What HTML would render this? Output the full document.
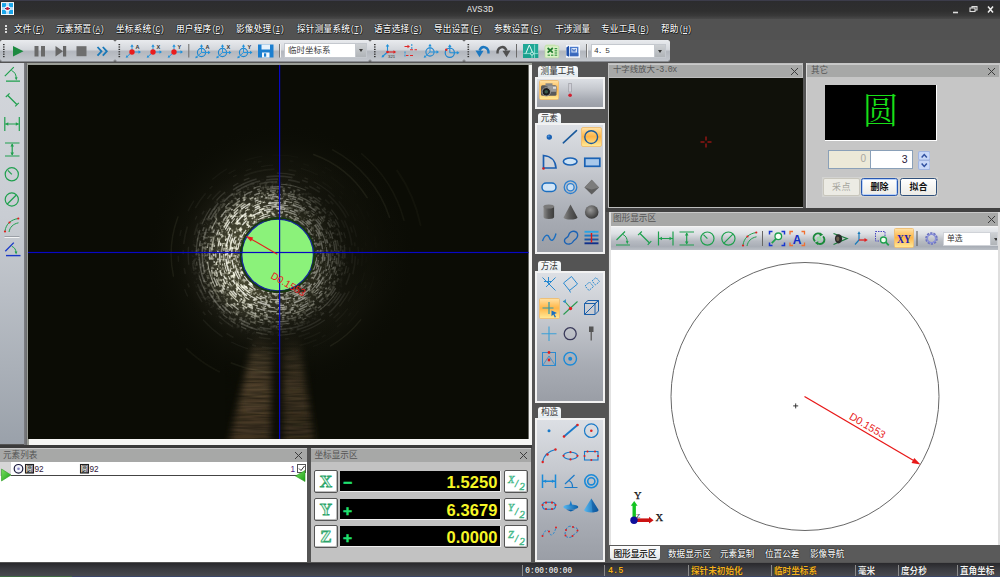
<!DOCTYPE html>
<html lang="zh-CN">
<head>
<meta charset="utf-8">
<title>AVS3D</title>
<style>
html,body{margin:0;padding:0;}
body{width:1000px;height:577px;overflow:hidden;background:#545454;position:relative;
 font-family:"Liberation Sans","Noto Sans CJK SC",sans-serif;font-size:9px;color:#222;}
.abs{position:absolute;}
#titlebar{left:0;top:0;width:1000px;height:19px;background:linear-gradient(#2c2c2e,#2f2f2f 55%,#383838 80%,#494949);border-top:1px solid #3c3c4a;box-sizing:border-box;}
#title{left:439px;top:4px;width:82px;text-align:center;color:#e4e4e4;font-family:"Liberation Mono",monospace;font-size:8.9px;line-height:12px;}
#menubar{left:0;top:19px;width:1000px;height:21px;background:#525252;}
.mi{position:absolute;top:23px;height:12px;line-height:12px;font-size:8.6px;letter-spacing:.25px;color:#f4f4f4;white-space:nowrap;text-shadow:0 0 1px #000,0 0 1px #000,.5px .5px 0 #222;font-weight:500;}
.mi u{text-decoration:underline;}
.mi .l{font-family:"Liberation Mono",monospace;font-size:8.2px;letter-spacing:-.75px;}
#tbarea{left:0;top:40px;width:1000px;height:23px;background:#545454;}
.tb{position:absolute;top:39.700px;height:21.500px;background:linear-gradient(#e9ebee,#d4d7dc 45%,#b3b7be 55%,#c3c7cd);border-radius:2.500px;box-shadow:0 1px 0 #8a8d92;}
.grip{position:absolute;width:2px;background:repeating-linear-gradient(#3a3a3a 0 1px,transparent 1px 2.5px);}
.sep{position:absolute;width:1px;background:#777;box-shadow:1px 0 0 #eee;}
.combo{position:absolute;background:#fff;border:1px solid #c4c8ce;box-sizing:border-box;font-size:8.5px;line-height:11px;color:#444;padding-left:3px;}
.combo i{position:absolute;right:0;top:0;bottom:0;width:10px;background:linear-gradient(#cdd0d3,#b0b4b8);border-left:1px solid #c4c8ce;}
.combo i:after{content:"";position:absolute;left:2.500px;top:5px;border:2.500px solid transparent;border-top:3px solid #3a3a3a;border-bottom:0;}
.ptitle{position:absolute;height:13px;background:#a7a8a7;color:#555;font-size:8.6px;line-height:11px;padding-left:4px;box-sizing:border-box;border-top:1px solid #c9c9c9;}
.ptitle b{position:absolute;right:4.500px;top:3px;width:7px;height:7px;font-size:0;background:linear-gradient(45deg,transparent 44%,#3c3c3c 44%,#3c3c3c 56%,transparent 56%),linear-gradient(-45deg,transparent 44%,#3c3c3c 44%,#3c3c3c 56%,transparent 56%);}
.panel{position:absolute;background:#c5c5c5;}
.tab{position:absolute;height:11px;background:linear-gradient(#fcfcfc,#e2eaee);border-radius:3px 3px 0 0;font-size:8.6px;line-height:11px;color:#333;text-align:center;}
.tpanel{position:absolute;border:2px solid #f2f2f2;box-sizing:border-box;background:linear-gradient(#dcdfe4,#c6c9cf 35%,#a8acb4 72%,#9a9ea6);}
.sel{position:absolute;background:linear-gradient(#ffe0a2,#ffc566 30%,#ffb548 48%,#ffd070 75%,#ffe894);border:1px solid #eec078;box-sizing:border-box;border-radius:1.500px;}
.btab{position:absolute;top:547.500px;height:13px;line-height:13px;font-size:8.600px;color:#f2f2f2;white-space:nowrap;text-shadow:0 0 1px #000,0 0 1px #000;font-weight:500;}
.cbtn{position:absolute;width:24px;height:23px;box-sizing:border-box;background:#fff;border:1px solid #555;border-radius:2px;box-shadow:inset -1px -1px 0 #bbb;font-family:"Liberation Serif",serif;font-weight:bold;font-size:17px;line-height:21px;text-align:center;color:#d8f4e4;-webkit-text-stroke:.8px #2aa468;}
.cbtn.h{font-size:10.500px;line-height:14px;text-align:left;padding-left:3px;padding-top:1.500px;font-style:italic;font-weight:normal;color:#7adcb0;-webkit-text-stroke:.45px #38b080;}
.cbtn.h i{font-size:10.500px;position:absolute;left:10px;top:5.500px;}
.cbtn.h s{text-decoration:none;font-size:10.500px;position:absolute;left:14.500px;top:8.500px;}
.cdisp{position:absolute;width:161px;height:21px;box-sizing:border-box;background:#000;border-bottom:1px solid #eee;border-right:1px solid #eee;color:#f6f626;font-weight:bold;font-size:16.500px;line-height:22px;text-align:right;padding-right:2.500px;letter-spacing:.1px;}
.cdisp .sg{position:absolute;left:3px;top:1px;color:#20e070;font-size:15.500px;letter-spacing:0;-webkit-text-stroke:.5px #20e070;}
.st{position:absolute;top:565.700px;height:11px;line-height:11px;font-size:8.600px;color:#f0f0f0;white-space:nowrap;font-weight:bold;text-shadow:0 0 1px #000;}
.st.y{color:#f0b020;}
.ss{position:absolute;top:565px;width:1px;height:11px;background:#8a8a8a;}
</style>
</head>
<body>
<!-- title bar -->
<div id="titlebar" class="abs"></div>
<svg class="abs" style="left:.8px;top:2px" width="13" height="13.200" viewBox="0 0 13 13"><rect x="0" y="0" width="13" height="13" fill="#fff"/><rect x="1" y="1" width="4.300" height="4.300" fill="#1aa6ea"/><rect x="7.700" y="1" width="4.300" height="4.300" fill="#1aa6ea"/><rect x="1" y="7.700" width="4.300" height="4.300" fill="#1aa6ea"/><rect x="7.700" y="7.700" width="4.300" height="4.300" fill="#1aa6ea"/><rect x="5.300" y="1" width="2.400" height="11" fill="#b8dcf8"/><rect x="1" y="5.300" width="11" height="2.400" fill="#b8dcf8"/><circle cx="6.500" cy="6.500" r="2.900" fill="#fff" opacity=".7"/><rect x="4" y="6" width="5" height="1" fill="#1a2a6a"/><circle cx="6.500" cy="6.500" r="1.500" fill="#d01838"/></svg>
<div id="title" class="abs">AVS3D</div>
<svg class="abs" style="left:945px;top:4px" width="50" height="12" viewBox="0 0 50 12"><path d="M8 8.5h5" stroke="#ddd" stroke-width="1.6"/><rect x="25" y="4" width="5" height="3.5" fill="none" stroke="#ddd" stroke-width="1.1"/><path d="M27 4v-1.4h5v3.4h-2" fill="none" stroke="#ddd" stroke-width="1.1"/><path d="M43 2.5l5 6M48 2.5l-5 6" stroke="#eee" stroke-width="1.5"/></svg>

<!-- menu bar -->
<div id="menubar" class="abs"></div>
<div class="grip" style="left:5px;top:25px;height:9px;background:repeating-linear-gradient(#ddd 0 1.5px,transparent 1.5px 3px)"></div>
<div class="mi" style="left:14px">文件<span class="l">(<u>F</u>)</span></div>
<div class="mi" style="left:56px">元素预置<span class="l">(<u>A</u>)</span></div>
<div class="mi" style="left:116px">坐标系统<span class="l">(<u>C</u>)</span></div>
<div class="mi" style="left:176px">用户程序<span class="l">(<u>P</u>)</span></div>
<div class="mi" style="left:236px">影像处理<span class="l">(<u>I</u>)</span></div>
<div class="mi" style="left:297px">探针测量系统<span class="l">(<u>T</u>)</span></div>
<div class="mi" style="left:374px">语言选择<span class="l">(<u>S</u>)</span></div>
<div class="mi" style="left:434px">导出设置<span class="l">(<u>E</u>)</span></div>
<div class="mi" style="left:494px">参数设置<span class="l">(<u>S</u>)</span></div>
<div class="mi" style="left:555px">干涉测量</div>
<div class="mi" style="left:601px">专业工具<span class="l">(<u>B</u>)</span></div>
<div class="mi" style="left:661px">帮助<span class="l">(<u>H</u>)</span></div>

<!-- toolbars -->
<div id="tbarea" class="abs"></div>
<div class="tb" style="left:0;width:115px"></div>
<div class="tb" style="left:115px;width:255px"></div>
<div class="tb" style="left:370px;width:94px"></div>
<div class="tb" style="left:464px;width:206px"></div>
<!--TB-START-->
<svg class="abs" style="left:0;top:40px" width="680" height="23" viewBox="0 40 680 23" font-family="Liberation Sans, sans-serif">
<defs>
<g id="ax1"><path d="M0 0V-6M0 0H7.500M0 0L-5 4.600" stroke="#2a96dc" stroke-width="1" fill="none"/><path d="M-1.700 -5.200L0 -7.800L1.700 -5.200zM6.500 -1.700L9 0L6.500 1.700zM-6.300 5.800L-5.500 3.300L-3.500 5.200z" fill="#2090d8"/><circle r="2.700" fill="#ea1c1c"/></g>
<g id="ax2"><circle r="4.100" fill="none" stroke="#1f86cf" stroke-width="1.100"/><path d="M0 0V-6.500M0 0H7.500M0 0L-5 4.600" stroke="#2a96dc" stroke-width="1" fill="none"/><path d="M-1.700 -5.700L0 -8.300L1.700 -5.700zM6.500 -1.700L9 0L6.500 1.700zM-6.300 5.800L-5.500 3.300L-3.500 5.200z" fill="#2090d8"/></g>
</defs>
<!-- grips -->
<g fill="#333"><g id="gr"><rect x="3" y="44" width="1.6" height="1.2"/><rect x="3" y="46.4" width="1.6" height="1.2"/><rect x="3" y="48.8" width="1.6" height="1.2"/><rect x="3" y="51.2" width="1.6" height="1.2"/><rect x="3" y="53.6" width="1.6" height="1.2"/><rect x="3" y="56" width="1.6" height="1.2"/></g>
<use href="#gr" x="115.5"/><use href="#gr" x="371"/><use href="#gr" x="464.5"/></g>
<!-- play controls -->
<path d="M13 46L23.5 51.2L13 56.5z" fill="#1d8a40"/>
<rect x="34.5" y="46" width="4" height="10.5" fill="#6a6a6a"/><rect x="41" y="46" width="4" height="10.5" fill="#6a6a6a"/>
<path d="M55.5 46L63 51.2L55.5 56.5z" fill="#666"/><rect x="63" y="46" width="3.2" height="10.5" fill="#666"/>
<rect x="76.5" y="46.2" width="10" height="10" fill="#6e6e6e"/>
<path d="M97.5 47L101.5 51.3L97.5 55.6M102.8 47L106.8 51.3L102.8 55.6" fill="none" stroke="#1878b8" stroke-width="1.8"/>
<!-- coord icons -->
<use href="#ax1" x="132" y="52"/><text x="135.5" y="49" font-size="5.5" font-weight="bold" fill="#333">A</text>
<use href="#ax1" x="153" y="52"/><text x="156.5" y="49" font-size="5.5" font-weight="bold" fill="#333">X</text>
<use href="#ax1" x="174" y="52"/><text x="177.5" y="49" font-size="5.5" font-weight="bold" fill="#333">Y</text>
<rect x="188.3" y="44" width="1" height="13.5" fill="#6a6a6a"/>
<use href="#ax2" x="201.5" y="52.5"/><text x="205.5" y="49" font-size="5.5" font-weight="bold" fill="#333">A</text>
<use href="#ax2" x="222.5" y="52.5"/><text x="226.5" y="49" font-size="5.5" font-weight="bold" fill="#333">X</text>
<use href="#ax2" x="243.5" y="52.5"/><text x="247.5" y="49" font-size="5.5" font-weight="bold" fill="#333">Y</text>
<!-- save -->
<path d="M258 44.5h15.5v13h-15.5z" fill="#1b7fd0"/><rect x="261.5" y="44.5" width="8.5" height="5" fill="#e8f2fb"/><rect x="262" y="52.5" width="7.5" height="5" fill="#f4f8fc"/><rect x="264" y="53.3" width="2.2" height="3.4" fill="#1b7fd0"/>
<rect x="279" y="44" width="1" height="13.5" fill="#777"/><rect x="280" y="44" width="1" height="13.5" fill="#f0f0f0"/>
<!-- 321 icon -->
<path d="M387.5 52V45.5M387.5 52L382.5 56.5" stroke="#2090d8" stroke-width="1.1"/><path d="M385.7 46.5L387.5 44L389.3 46.5zM381.5 57.5L382.2 54.9L384.4 56.9z" fill="#2090d8"/><path d="M387.5 52H394" stroke="#e02020" stroke-width="1.1"/><path d="M393.5 50.2L396.2 52L393.5 53.8z" fill="#e02020"/><circle cx="387.5" cy="52" r="1.3" fill="#e02020"/><text x="388" y="58.3" font-size="4.3" fill="#333">321</text>
<!-- dashes icon -->
<g stroke="#e02828" stroke-width="1.1" fill="none"><path d="M404.5 46.5h3.5M410 49.8h3M414.5 49.8h2.5M406 55.5h2.5M410 55.5h3" /></g><path d="M407.5 44.8L410 46.5L407.5 48.2z" fill="#e02828"/><path d="M411.8 44v6M405 51.5v5" stroke="#2090d8" stroke-width="1" stroke-dasharray="2 1"/>
<use href="#ax2" x="430" y="52"/>
<circle cx="449.8" cy="52.8" r="4.6" fill="none" stroke="#1f86cf" stroke-width="1.2"/><path d="M449.8 52.8V46M449.8 52.8H457.5" stroke="#2090d8" stroke-width="1.1"/><path d="M448 47L449.8 44.3L451.6 47zM456.8 51L459.5 52.8L456.8 54.6z" fill="#2090d8"/><circle cx="446.3" cy="49.8" r="1.2" fill="#e02828"/>
<!-- undo / redo -->
<path d="M488.5 53.5C489 47 482 44.5 479.5 50.5" fill="none" stroke="#1c78c0" stroke-width="2.4"/><path d="M475.5 50.5L483.5 50.8L479.5 57.3z" fill="#1c78c0"/>
<path d="M497.5 53.5C497 47 504 44.5 506.5 50.5" fill="none" stroke="#505050" stroke-width="2.4"/><path d="M510.5 50.5L502.5 50.8L506.5 57.3z" fill="#505050"/>
<rect x="516" y="44" width="1" height="13.5" fill="#6a6a6a"/>
<!-- green icon -->
<rect x="523" y="44" width="15.200" height="14" fill="#1fa896"/><rect x="523" y="53.800" width="15.200" height="4.200" fill="#18a08c"/><path d="M523.500 53.600h14.500M534.600 44.500v13.500" stroke="#9fe6da" stroke-width=".8" fill="none"/><path d="M525.800 53.500L529.300 45L533 53.500" stroke="#e4faf6" stroke-width="1" fill="none"/><circle cx="532" cy="53.600" r="1.500" fill="#1fa896" stroke="#eafaf6" stroke-width=".8"/><path d="M532 55v3" stroke="#c8f0ea" stroke-width=".7"/>
<!-- excel -->
<path d="M545 46.200q0-1.600 1.600-1.600h8.500l1.200 1.600z" fill="#cfe9b8"/><rect x="545" y="45.800" width="13.800" height="12" rx="1" fill="#dcf1c8" stroke="#b4d89a" stroke-width=".6"/><path d="M547.600 48l5.200 4.600M552.800 48l-5.200 4.600" stroke="#1f7a2e" stroke-width="1.700"/><g fill="#3e9a48"><rect x="554.600" y="48" width="2.600" height="1.200"/><rect x="554.600" y="50.200" width="2.600" height="1.200"/><rect x="554.600" y="52.400" width="2.600" height="1.200"/><rect x="547.600" y="54.600" width="2.400" height="1.200"/><rect x="551" y="54.600" width="2.400" height="1.200"/><rect x="554.600" y="54.600" width="2.600" height="1.200"/></g>
<!-- word -->
<rect x="566" y="45" width="14" height="12.800" fill="#f4f7fc"/><path d="M566.400 47.500l2.600-1.800v11l-2.600-1.300z" fill="#1f4fa8"/><rect x="569.800" y="46.800" width="8.600" height="9.400" fill="#4a7acc"/><rect x="571.500" y="48" width="5.500" height="4.400" fill="#dfe9f8"/><path d="M572.300 48.800l.8 2.800l.9-2.200l.9 2.200l.8-2.800" stroke="#2c5cb8" stroke-width=".7" fill="none"/><rect x="569.800" y="53.200" width="8.600" height="3" fill="#3a68bc"/>
<rect x="586" y="44" width="1" height="13.5" fill="#777"/><rect x="587" y="44" width="1" height="13.5" fill="#f0f0f0"/>
</svg>
<div class="combo" style="left:284px;top:43px;width:83px;height:15px;line-height:13px;">临时坐标系<i></i></div>
<div class="combo" style="left:591px;top:44px;width:75px;height:14px;line-height:12px;font-family:'Liberation Mono','Noto Sans CJK SC',monospace;font-size:7.800px;letter-spacing:-.9px;padding-left:2px;color:#333">4. 5<i></i></div>
<!--TB-END-->

<!--LV-START-->
<!-- left toolbar -->
<div class="abs" style="left:0;top:63px;width:24px;height:381px;background:linear-gradient(#d3d6db,#c9cdd3 40%,#aab0b8 80%,#9aa1aa);"></div>
<div class="abs" style="left:24px;top:63px;width:3px;height:384px;background:linear-gradient(90deg,#7d7f83,#6a6b6d)"></div>
<svg class="abs" style="left:0;top:63px" width="24" height="200" viewBox="0 63 24 200" fill="none" stroke="#1fa04e" stroke-width="1.2">
<path d="M6 81.2h14M4.8 76.2L13.8 67.2"/><path d="M11.5 70.5C15 72 16.3 75 16.2 78.5" stroke-width="1"/><path d="M14.8 77.5L16.3 80.5L17.6 77.3z" fill="#1fa04e" stroke="none"/>
<path d="M7.8 95.5L16.8 104.5" /><path d="M5.8 97L9.6 93.4M15.2 106.4L18.8 102.8" stroke-width="1.1"/>
<path d="M4.8 117v14M19.3 117v14M5.5 124h13"/><path d="M5.3 124l3-1.8v3.6zM18.8 124l-3-1.8v3.6z" fill="#1fa04e" stroke="none"/>
<path d="M5 143h14.5M5 156h14.5M12.2 144v11"/><path d="M12.2 143.6l-1.8 3h3.6zM12.2 155.4l-1.8-3h3.600z" fill="#1fa04e" stroke="none"/>
<circle cx="11.8" cy="174.3" r="6.6"/><path d="M11.8 174.3L7.8 170.3" />
<circle cx="11.8" cy="199.5" r="6.6"/><path d="M7.3 204L16.3 195"/>
<path d="M5 231C6 224 11 219.5 18.5 218.5M9 232C10 227 13 224 18.5 222.8" stroke-width="1"/><circle cx="5" cy="231.5" r="1.1" fill="#e02020" stroke="none"/><circle cx="18.3" cy="218.5" r="1.1" fill="#e02020" stroke="none"/><circle cx="9.5" cy="222.5" r="1.1" fill="#e02020" stroke="none"/>
<path d="M4.500 236.500h15" stroke="#9a9fa6" stroke-width="1"/><path d="M4.500 237.500h15" stroke="#f2f3f5" stroke-width="1"/>
<path d="M6 255.600h14.500" stroke="#1838c8" stroke-width="1.400"/><path d="M5.300 251.300L13.800 242.600" stroke="#1838c8" stroke-width="1.300"/><path d="M11.800 246.300C14.800 247.500 16 250 16 252.600" stroke-width="1"/><path d="M14.600 251.600L16.100 254.600L17.400 251.400z" fill="#1fa04e" stroke="none"/>
</svg>
<!-- video -->
<div class="abs" style="left:26.500px;top:63px;width:505.100px;height:382px;background:#f6f6f4;border-left:2px solid #9c9f98;border-top:2px solid #9c9f98;box-sizing:border-box"></div>
<svg class="abs" style="left:28px;top:65px" width="500.600" height="374.400" viewBox="28 65 500 374" preserveAspectRatio="none">
<defs>
<radialGradient id="ring" cx="272" cy="257" fx="266" fy="260" r="96" gradientUnits="userSpaceOnUse">
<stop offset="0" stop-color="#222"/><stop offset=".36" stop-color="#45452f"/><stop offset=".48" stop-color="#40402e"/><stop offset=".60" stop-color="#323224"/><stop offset=".70" stop-color="#222218" stop-opacity=".95"/><stop offset=".80" stop-color="#191911" stop-opacity=".8"/><stop offset=".9" stop-color="#14140c" stop-opacity=".5"/><stop offset="1" stop-color="#0b0c05" stop-opacity="0"/>
</radialGradient>
<radialGradient id="spk" cx="269" cy="258" r="80" gradientUnits="userSpaceOnUse">
<stop offset="0" stop-color="#f8f8e8"/><stop offset=".58" stop-color="#f8f8e8"/><stop offset=".74" stop-color="#f4f4e4" stop-opacity=".5"/><stop offset="1" stop-color="#f4f4e4" stop-opacity="0"/>
</radialGradient>
<radialGradient id="halo" cx=".5" cy=".5" r=".5"><stop offset="0" stop-color="#2a2a1c" stop-opacity=".9"/><stop offset=".6" stop-color="#1c1c12" stop-opacity=".7"/><stop offset="1" stop-color="#0b0c05" stop-opacity="0"/></radialGradient>
<radialGradient id="shade" cx=".5" cy=".5" r=".5"><stop offset="0" stop-color="#0b0c05" stop-opacity=".62"/><stop offset=".55" stop-color="#0b0c05" stop-opacity=".42"/><stop offset="1" stop-color="#0b0c05" stop-opacity="0"/></radialGradient>
<radialGradient id="arcmask" cx="264" cy="260" r="105" gradientUnits="userSpaceOnUse">
<stop offset="0" stop-color="#fff"/><stop offset=".5" stop-color="#eee"/><stop offset=".72" stop-color="#666"/><stop offset="1" stop-color="#1a1a1a"/>
</radialGradient>
<mask id="am"><rect x="28" y="65" width="500" height="374" fill="url(#arcmask)"/></mask>
<linearGradient id="cone" x1="0" y1="320" x2="0" y2="439" gradientUnits="userSpaceOnUse"><stop offset="0" stop-color="#6c5a42" stop-opacity=".95"/><stop offset=".5" stop-color="#5c4a32" stop-opacity=".9"/><stop offset="1" stop-color="#4a3a26" stop-opacity=".85"/></linearGradient>
<filter id="bl" x="-20%" y="-20%" width="140%" height="140%"><feGaussianBlur stdDeviation="3.500"/></filter>
<filter id="bands" x="0" y="0" width="100%" height="100%" color-interpolation-filters="sRGB"><feTurbulence type="fractalNoise" baseFrequency=".03 .42" numOctaves="2" seed="11" result="n"/><feColorMatrix in="n" type="matrix" values="0 0 0 0 .043  0 0 0 0 .047  0 0 0 0 .02  1.800 0 0 0 -.55"/></filter>
<filter id="bl2"><feGaussianBlur stdDeviation=".55"/></filter>
<filter id="noise" x="0" y="0" width="100%" height="100%"><feTurbulence type="fractalNoise" baseFrequency=".28 .28" numOctaves="2" seed="5" result="n"/><feColorMatrix in="n" type="matrix" values="0 0 0 0 1  0 0 0 0 1  0 0 0 0 .82  2.600 2.600 0 0 -2.550" result="m"/><feComposite in="m" in2="SourceGraphic" operator="in"/></filter>
<clipPath id="vc"><rect x="28" y="65" width="500" height="374"/></clipPath>
</defs>
<rect x="28" y="65" width="500" height="374" fill="#0b0c05"/>
<g clip-path="url(#vc)">
<g filter="url(#bl)">
<path d="M256 330L228 445L270 445L272 330z" fill="url(#cone)"/>
<path d="M283 336L283 445L315 445L298 336z" fill="url(#cone)" opacity=".8"/>
</g>
<rect x="225" y="335" width="90" height="104" fill="#000" filter="url(#bands)" opacity=".55"/>
<circle cx="280" cy="256" r="135" fill="url(#halo)"/>
<circle cx="272" cy="257" r="96" fill="url(#ring)"/>
<circle cx="269" cy="258" r="80" fill="url(#spk)" filter="url(#noise)" opacity=".85"/>
<g fill="none" filter="url(#bl2)" mask="url(#am)">
<circle cx="277" cy="254" r="39.5" stroke="#fffff4" stroke-width="1.0" stroke-dasharray="3 10 13 3 2 14 2 7 9 3 9 5 2 3" opacity="0.85" transform="rotate(222 277 254)"/>
<circle cx="277" cy="254" r="41.5" stroke="#f0f0e0" stroke-width="1.0" stroke-dasharray="2 14 6 3 9 3 3 14 2 14 9 10" opacity="0.85" transform="rotate(25 277 254)"/>
<circle cx="277" cy="254" r="43.5" stroke="#f0f0e0" stroke-width="1.3" stroke-dasharray="4 10 3 14 2 14 4 14 13 5 2 14" opacity="0.85" transform="rotate(292 277 254)"/>
<circle cx="277" cy="254" r="45.5" stroke="#fffff4" stroke-width="1.3" stroke-dasharray="9 3 9 3 9 5 6 14 6 7" opacity="0.85" transform="rotate(238 277 254)"/>
<circle cx="277" cy="254" r="47.5" stroke="#ffffee" stroke-width="1.6" stroke-dasharray="3 5 13 5 2 14 4 14 6 7 13 10 4 14" opacity="0.85" transform="rotate(37 277 254)"/>
<circle cx="277" cy="254" r="49.5" stroke="#fffff4" stroke-width="1.0" stroke-dasharray="3 7 3 10 6 3 13 3 9 14 4 7 13 7 9 10" opacity="0.85" transform="rotate(296 277 254)"/>
<circle cx="277" cy="254" r="51.5" stroke="#fffff4" stroke-width="1.6" stroke-dasharray="4 10 13 3 2 7 13 14 13 10" opacity="0.85" transform="rotate(145 277 254)"/>
<circle cx="277" cy="254" r="53.5" stroke="#ffffee" stroke-width="1.0" stroke-dasharray="2 10 4 5 9 3 6 3 3 7 3 5 6 10" opacity="0.85" transform="rotate(254 277 254)"/>
<circle cx="277" cy="254" r="55.5" stroke="#f0f0e0" stroke-width="1.0" stroke-dasharray="6 14 4 5 6 14 4 10 4 10 3 5 2 5 3 5" opacity="0.85" transform="rotate(337 277 254)"/>
<circle cx="277" cy="254" r="57.5" stroke="#fffff4" stroke-width="1.3" stroke-dasharray="9 5 4 7 2 5 6 14 4 14 9 7 3 14 9 3" opacity="0.85" transform="rotate(233 277 254)"/>
<circle cx="277" cy="254" r="59.5" stroke="#f0f0e0" stroke-width="1.6" stroke-dasharray="6 3 6 10 2 5 2 5 6 5 2 7 9 3 2 3" opacity="0.85" transform="rotate(290 277 254)"/>
<circle cx="277" cy="254" r="61.5" stroke="#e4e4d0" stroke-width="1.3" stroke-dasharray="4 14 2 3 3 14 6 5 13 7" opacity="0.85" transform="rotate(177 277 254)"/>
<circle cx="277" cy="254" r="63.5" stroke="#fffff4" stroke-width="1.6" stroke-dasharray="2 10 6 10 6 7 2 5 2 7" opacity="0.6" transform="rotate(135 277 254)"/>
<circle cx="277" cy="254" r="65.5" stroke="#e4e4d0" stroke-width="1.6" stroke-dasharray="9 3 3 14 4 5 13 14 2 14 4 3" opacity="0.6" transform="rotate(356 277 254)"/>
<circle cx="277" cy="254" r="67.5" stroke="#fffff4" stroke-width="1.3" stroke-dasharray="3 7 3 14 9 14 4 5 9 5 3 10 13 5" opacity="0.6" transform="rotate(102 277 254)"/>
<circle cx="277" cy="254" r="70" stroke="#ffffee" stroke-width="1.0" stroke-dasharray="4 14 12 14 6 28 8 20 26 14" opacity="0.6" transform="rotate(186 277 254)"/>
<circle cx="277" cy="254" r="72.5" stroke="#e4e4d0" stroke-width="1.6" stroke-dasharray="6 20 6 14 6 20 18 28 4 20" opacity="0.35" transform="rotate(334 277 254)"/>
<circle cx="277" cy="254" r="75" stroke="#fffff4" stroke-width="1.6" stroke-dasharray="26 6 12 10 12 10 12 14 4 20" opacity="0.35" transform="rotate(237 277 254)"/>
<circle cx="277" cy="254" r="78" stroke="#fffff4" stroke-width="1.6" stroke-dasharray="26 10 6 10 4 10 18 20 26 10" opacity="0.35" transform="rotate(313 277 254)"/>
<circle cx="277" cy="254" r="81" stroke="#f0f0e0" stroke-width="1.3" stroke-dasharray="6 28 18 10 4 6 26 6 18 10 12 10 6 6" opacity="0.35" transform="rotate(128 277 254)"/>
<circle cx="277" cy="254" r="85" stroke="#f0f0e0" stroke-width="1.6" stroke-dasharray="18 14 8 28 12 10 4 14 12 28 18 20" opacity="0.18" transform="rotate(256 277 254)"/>
<circle cx="277" cy="254" r="89" stroke="#ffffee" stroke-width="1.3" stroke-dasharray="18 28 4 20 6 28 4 10 6 10 12 28" opacity="0.18" transform="rotate(61 277 254)"/>
<circle cx="277" cy="254" r="94" stroke="#f0f0e0" stroke-width="1.6" stroke-dasharray="4 28 4 10 6 14 4 6 18 20 18 6 4 20 8 28" opacity="0.18" transform="rotate(258 277 254)"/>
<circle cx="277" cy="254" r="99" stroke="#fffff4" stroke-width="1.3" stroke-dasharray="12 28 18 20 18 10 26 28 8 28 6 20 6 20" opacity="0.18" transform="rotate(62 277 254)"/>
</g>
<circle cx="334" cy="238" r="78" fill="url(#shade)"/>
<circle cx="290" cy="318" r="50" fill="url(#shade)" opacity=".6"/>
<g fill="none" stroke="#9a9a78" stroke-linecap="round" filter="url(#bl2)">
<circle cx="277" cy="254" r="106" stroke-width="1.400" stroke-dasharray="70 130 40 200 60 166" opacity=".11" transform="rotate(-70 277 254)"/>
<circle cx="277" cy="254" r="118" stroke-width="1.600" stroke-dasharray="90 220 50 381" opacity=".09" transform="rotate(-62 277 254)"/>
<circle cx="277" cy="254" r="131" stroke-width="1.600" stroke-dasharray="80 300 40 403" opacity=".07" transform="rotate(-50 277 254)"/>
<circle cx="277" cy="254" r="146" stroke-width="1.800" stroke-dasharray="60 857" opacity=".05" transform="rotate(-35 277 254)"/>
</g>
<circle cx="277.300" cy="254.800" r="38" fill="#16380f"/>
<circle cx="277.300" cy="254.800" r="35.800" fill="#8bf27a" stroke="#1a2a9c" stroke-width="1.300"/>
<circle cx="277.300" cy="254.800" r="36.600" fill="none" stroke="#16380f" stroke-width="1.600" stroke-dasharray="14 30 20 50"/>
</g>
<rect x="28" y="251.700" width="500" height="1.200" fill="#0808c4"/>
<rect x="278.700" y="65" width="1.200" height="374" fill="#0808c4"/>
<path d="M277 254L248.500 237.500" stroke="#e81c1c" stroke-width="1.100"/><path d="M245.500 235.800L253 237.200L250.600 241.400z" fill="#e81c1c"/>
<text transform="translate(269.800 277.500) rotate(30)" font-family="Liberation Sans, sans-serif" font-size="10" fill="#e82020">D0.1553</text>
</svg>
<!--LV-END-->
<!--MID-START-->
<!-- middle tool panels -->
<div class="tab" style="left:537.500px;top:66px;width:40.500px">测量工具</div>
<div class="tpanel" style="left:535px;top:76.700px;width:70px;height:32.500px"></div>
<div class="sel" style="left:539px;top:80px;width:20px;height:20px"></div>
<div class="tab" style="left:537.500px;top:113px;width:23.500px">元素</div>
<div class="tpanel" style="left:535px;top:123px;width:70px;height:131px"></div>
<div class="sel" style="left:581px;top:127px;width:21px;height:20px;border-radius:2px"></div>
<div class="tab" style="left:537.500px;top:260.500px;width:23.500px">方法</div>
<div class="tpanel" style="left:535px;top:271px;width:70px;height:132px"></div>
<div class="sel" style="left:539px;top:298px;width:21px;height:21px"></div>
<div class="tab" style="left:538px;top:407px;width:23px">构造</div>
<div class="tpanel" style="left:535px;top:417.500px;width:70px;height:144.500px"></div>
<svg class="abs" style="left:535px;top:76px" width="70" height="486" viewBox="535 76 70 486" fill="none">
<defs>
<linearGradient id="gm" x1="0" y1="0" x2="1" y2="0"><stop offset="0" stop-color="#8a8a8a"/><stop offset=".45" stop-color="#5a5a5a"/><stop offset="1" stop-color="#3c3c3c"/></linearGradient>
<radialGradient id="gs" cx=".4" cy=".35" r=".7"><stop offset="0" stop-color="#9a9a9a"/><stop offset="1" stop-color="#333"/></radialGradient>
<linearGradient id="gb" x1="0" y1="0" x2="1" y2="0"><stop offset="0" stop-color="#58b8f0"/><stop offset="1" stop-color="#0a5ea8"/></linearGradient>
</defs>
<!-- camera -->
<g transform="translate(-.5 .8)"><rect x="541.500" y="84.500" width="15.500" height="10.500" rx="1.500" fill="#5a5a5a"/><rect x="546" y="82.500" width="7" height="3" fill="#888"/><rect x="548" y="85" width="9" height="6" fill="#9a9a9a"/><circle cx="546.800" cy="91" r="4.200" fill="#1c1c1c" stroke="#9a9a9a" stroke-width="1"/><circle cx="546.800" cy="91" r="1.800" fill="#3a5a4a"/><rect x="553.500" y="86" width="3" height="2" fill="#ddd"/></g>
<!-- exclamation -->
<rect x="568.800" y="83.500" width="2.600" height="8.500" fill="#d0d0d8" stroke="#8a8a92" stroke-width=".5"/><circle cx="570.100" cy="95.200" r="1.800" fill="#d02030"/>
<!-- elements row1 -->
<circle cx="549.300" cy="137.100" r="2.700" fill="#1a62b4"/><circle cx="548.600" cy="136.300" r="1.100" fill="#4a8ed8"/>
<path d="M563.300 142.800L576.500 130.600" stroke="#1a5a9c" stroke-width="1.600" stroke-linecap="round"/>
<circle cx="591.200" cy="137.100" r="6.400" stroke="#1a5a9c" stroke-width="1.400"/>
<!-- row2 -->
<path d="M543.500 168V155.500C551 156 555.500 161 556 168z" stroke="#1a5eb0" stroke-width="1.700" fill="#d0d4da"/><circle cx="543.500" cy="168.500" r="1.300" fill="#d02020"/>
<ellipse cx="570.200" cy="161.500" rx="6.800" ry="3.500" stroke="#1a62b4" stroke-width="1.600" fill="#cfe4f6"/>
<rect x="584.800" y="158.300" width="15" height="8" stroke="#1a62b4" stroke-width="1.700" fill="#a8c8ea"/>
<!-- row3 -->
<rect x="542" y="183" width="14" height="8.500" rx="4.200" stroke="#1a6ec0" stroke-width="1.500" fill="#d4e6f6"/>
<circle cx="570.500" cy="187.200" r="6.300" stroke="#2a7fd0" stroke-width="1.300"/><circle cx="570.500" cy="187.200" r="3.600" stroke="#2a7fd0" stroke-width="1.300" fill="#c8def2"/>
<path d="M591.700 179.800L599 187.500L591.700 194.500L584.500 187.500z" fill="#5e5e5e"/><path d="M591.700 179.800L599 187.500L591.700 189.500L584.500 187.500z" fill="#7c7c7c"/>
<!-- row4 -->
<path d="M543.500 206.500v10.500a5.300 2 0 0 0 10.600 0v-10.500z" fill="url(#gm)"/><ellipse cx="548.800" cy="206.500" rx="5.300" ry="2" fill="#7a7a7a"/>
<path d="M570.500 204.500L577.500 217.500a7 2 0 0 1 -14 0z" fill="url(#gm)"/>
<circle cx="591.700" cy="212" r="6.800" fill="url(#gs)"/>
<!-- row5 -->
<path d="M542.500 241C545 234 548 234 549.500 238S554 241 556 233.500" stroke="#1a6ec0" stroke-width="1.400"/>
<path d="M568.500 235.500C569.500 232 572.500 230.800 575 231.500C577.800 232.300 578.300 235 577 237.500C576 239.500 574 240 572.800 242C571.500 244.300 567.500 244.800 565.500 243C563.600 241.200 564.500 238.800 566.300 237.800C567.800 237 568 237 568.500 235.500z" stroke="#1a62b4" stroke-width="1.400"/>
<path d="M584.500 231.800h14" stroke="#2aa4e4" stroke-width="1.900"/><path d="M584.500 235.600h14" stroke="#1a7ac8" stroke-width="1.900"/><path d="M584.500 239.500h14" stroke="#1a56a4" stroke-width="1.900"/><path d="M584.500 243.300h14" stroke="#10308a" stroke-width="1.900"/><path d="M591.500 233v9.500" stroke="#d81818" stroke-width="1.400"/>
<!-- method row1 -->
<g stroke="#2a8ad0" stroke-width="1">
<path d="M542.500 277.500L555.500 290.500M555.500 277.500L546 287M548.500 277v6M544 281.500h7" />
<path d="M563.500 283L571.500 276.500L577.500 284L569.500 290.500z"/><path d="M569 289.500l1.500 3" />
<path d="M585 286L589.500 282L593.500 286.500L589 290.500zM592 281L596 277.500L599.500 281.500L595.500 285z" stroke-dasharray="2 1"/>
</g>
<!-- method row2 -->
<path d="M542.500 308h11M549 302v12" stroke="#2a9ab0" stroke-width="1.200"/><path d="M551.500 310.500l5.500 2.500l-2.500 1l1.500 3l-1.200.5l-1.500-3l-1.800 1.800z" fill="#1a6ec0"/>
<path d="M563.500 314.500L570.500 308L577.500 301.500M564 300.500L570.500 308" stroke="#2a9a50" stroke-width="1.100"/><path d="M563 301.500l3 .5M565.500 299.500l-.5 3.500" stroke="#2a8ad0" stroke-width="1"/><circle cx="570.500" cy="308.500" r="1.700" fill="#e02020"/>
<path d="M584.500 303.500l3.500-3h10.500v10.500l-3.500 3.500h-10.500zM584.500 303.500h10.500v11M595 303.500l3.500-3M584.500 314.500L598.500 300.500" stroke="#1a5ea8" stroke-width="1"/>
<!-- method row3 -->
<path d="M541.500 333.700h15M549 326.500v14.500" stroke="#3aa0d8" stroke-width="1.100"/>
<circle cx="570.200" cy="333.700" r="6" stroke="#3a3a5a" stroke-width="1.300"/>
<rect x="589" y="326.500" width="4.500" height="5.500" fill="#555"/><rect x="590.500" y="332" width="1.500" height="8.500" fill="#666"/>
<!-- method row4 -->
<rect x="542.500" y="352.500" width="13" height="13" stroke="#2a8ad0" stroke-width="1"/><path d="M543 365L549 356L555 365" stroke="#2a8ad0" stroke-width=".8"/><circle cx="549" cy="352.500" r="1.400" fill="#e02020"/><circle cx="549" cy="360" r="1.400" fill="#e02020"/>
<circle cx="570.200" cy="358.700" r="6.300" stroke="#1a8ad8" stroke-width="1.400"/><circle cx="570.200" cy="358.700" r="2" fill="#1a8ad8"/>
<!-- construct row1 -->
<circle cx="549" cy="430.700" r="1.500" fill="#1a7ac8"/>
<path d="M564 436.500L577.500 425" stroke="#1a7ac8" stroke-width="1.800"/><circle cx="564" cy="436.500" r="1.300" fill="#e02020"/><circle cx="577.500" cy="425" r="1.300" fill="#e02020"/>
<circle cx="591.300" cy="430.700" r="6.800" stroke="#1a7ac8" stroke-width="1.200"/><circle cx="591.300" cy="430.700" r="1.300" fill="#e02020"/>
<!-- construct row2 -->
<path d="M542.500 462C544 455 549 451 555.500 449.500" stroke="#1a7ac8" stroke-width="1.200"/><circle cx="542.700" cy="462" r="1.200" fill="#e02020"/><circle cx="547.500" cy="454.500" r="1.200" fill="#e02020"/><circle cx="555.500" cy="449.500" r="1.200" fill="#e02020"/>
<ellipse cx="570.500" cy="455.800" rx="7" ry="3.600" stroke="#1a7ac8" stroke-width="1.100"/><g fill="#e02020"><circle cx="563.500" cy="455.800" r="1.100"/><circle cx="577.500" cy="455.800" r="1.100"/><circle cx="570.500" cy="452.200" r="1.100"/><circle cx="570.500" cy="459.400" r="1.100"/></g>
<rect x="584.500" y="451.500" width="13.500" height="8.500" stroke="#1a7ac8" stroke-width="1.100"/><g fill="#e02020"><circle cx="587.500" cy="451.500" r="1"/><circle cx="595" cy="451.500" r="1"/><circle cx="584.500" cy="456" r="1"/><circle cx="598" cy="456" r="1"/><circle cx="591.300" cy="460" r="1"/></g>
<!-- construct row3 -->
<path d="M542.500 474.500v13.500M555.500 474.500v13.500M543 481.300h12" stroke="#1a8ad8" stroke-width="1.500"/><path d="M543.300 481.300l2.800-1.800v3.600zM554.700 481.300l-2.800-1.800v3.600z" fill="#1a8ad8"/>
<path d="M564.500 487.500h13M565 484L574.500 475M568.500 480.500C571.500 481.500 572.500 484 572.500 487" stroke="#1a7ac8" stroke-width="1.200"/>
<circle cx="591.300" cy="481.300" r="6.500" stroke="#1a8ad8" stroke-width="1.600"/><circle cx="591.300" cy="481.300" r="3.600" stroke="#1a8ad8" stroke-width="1.600"/>
<!-- construct row4 -->
<rect x="542.500" y="502.300" width="13" height="7" rx="3.500" stroke="#1a7ac8" stroke-width="1.100"/><g fill="#e02020"><circle cx="542.500" cy="505" r="1.100"/><circle cx="555.500" cy="505" r="1.100"/><circle cx="546" cy="502.700" r="1.100"/><circle cx="552" cy="502.700" r="1.100"/><circle cx="546" cy="509" r="1.100"/><circle cx="552" cy="509" r="1.100"/></g>
<ellipse cx="570.800" cy="507" rx="7.500" ry="2.500" fill="url(#gb)"/><path d="M570.800 500.500l1.500 5h-3z" fill="#1a7ac8"/><path d="M566 509.500l4.800 2l4.800-2z" fill="#0a5ea8"/>
<path d="M591.300 498.500L598.500 510a7.200 2.500 0 0 1 -14.400 0z" fill="url(#gb)"/><path d="M591.300 498.500L598.500 510a7.200 2.500 0 0 1 -6 2.400z" fill="#0a4e94" opacity=".5"/>
<!-- construct row5 -->
<path d="M542.500 536C545 529 548 529 549.500 533S554 535 556 527.500" stroke="#2a8ad0" stroke-width="1" stroke-dasharray="2.500 1.500"/><g fill="#e02020"><circle cx="542.500" cy="536" r="1"/><circle cx="549" cy="531.500" r="1"/><circle cx="556" cy="527.500" r="1"/></g>
<path d="M566 530C567 526 571 525.500 573 527C575 528.500 577.500 527 577.500 530C577.500 534 574 533.500 572.500 536C571 538 566.500 538 565.500 535.500C564.500 533 565.500 532 566 530z" stroke="#1a7ac8" stroke-width="1" stroke-dasharray="2.500 1.500"/><g fill="#e02020"><circle cx="566" cy="530" r="1"/><circle cx="573" cy="527" r="1"/><circle cx="577.500" cy="530.500" r="1"/><circle cx="572.500" cy="536" r="1"/><circle cx="565.500" cy="535.500" r="1"/></g>
</svg>
<!--MID-END-->
<!--R-START-->
<!-- crosshair zoom panel -->
<div class="panel" style="left:608px;top:63px;width:195px;height:145px;background:#bdbdbd"></div>
<div class="ptitle" style="left:609px;top:64px;width:193px;font-family:'Liberation Mono','Noto Sans CJK SC',monospace;font-size:8.400px">十字线放大<span style="letter-spacing:-.7px">-3.0x</span><b>✕</b></div>
<div class="abs" style="left:609px;top:78px;width:194px;height:129px;background:#10110a"></div>
<svg class="abs" style="left:700px;top:136px" width="12" height="12" viewBox="0 0 12 12"><path d="M6 .5v4M6 7.500v4M.5 6h4M7.500 6h4" stroke="#d01818" stroke-width="1"/></svg>
<!-- other panel -->
<div class="panel" style="left:806px;top:63px;width:194px;height:145px;background:#c6c6c6;border-left:1px solid #dcdcdc;box-sizing:border-box"></div>
<div class="ptitle" style="left:807px;top:64px;width:192px">其它<b>✕</b></div>
<div class="abs" style="left:825px;top:85px;width:112px;height:56px;background:#000;border-right:1px solid #fff;border-bottom:1px solid #fff;box-sizing:border-box;color:#18e018;font-family:'Noto Serif CJK SC','Liberation Serif',serif;font-weight:300;font-size:36px;line-height:47px;text-align:center;">圆</div>
<div class="abs" style="left:828px;top:150px;width:43px;height:19px;box-sizing:border-box;background:#ece9d8;border:1px solid #8aa0b8;color:#a8a8a0;font-size:10px;line-height:16px;text-align:right;padding-right:4px">0</div>
<div class="abs" style="left:870px;top:150px;width:43px;height:19px;box-sizing:border-box;background:#fff;border:1px solid #8aa0b8;color:#2a1838;font-size:10.500px;line-height:16px;text-align:right;padding-right:4.500px">3</div>
<svg class="abs" style="left:917.500px;top:150.500px" width="12.500" height="19" viewBox="0 0 12 19" preserveAspectRatio="none"><rect x=".5" y=".5" width="11" height="8.500" rx="1.500" fill="#c8d8f8" stroke="#a0b4e0"/><rect x=".5" y="9.500" width="11" height="9" rx="1.500" fill="#c8d8f8" stroke="#a0b4e0"/><path d="M3.500 6.500L6 3.500L8.500 6.500M3.500 12.500L6 15.500L8.500 12.500" stroke="#3050a0" stroke-width="1.400" fill="none"/></svg>
<div class="abs" style="left:822px;top:177px;width:115.500px;height:20px;background:#d3d3d1"></div>
<div class="abs" style="left:823px;top:178px;width:37px;height:18px;box-sizing:border-box;background:#ecebe4;border:1px solid #c8c6bc;border-radius:2px;color:#a4a49c;font-size:9px;line-height:17px;text-align:center;letter-spacing:.5px">采点</div>
<div class="abs" style="left:861px;top:178px;width:37px;height:18px;box-sizing:border-box;background:linear-gradient(#fff,#ecebe6);border:1.500px solid #2858b0;border-radius:2.500px;color:#111;font-size:9px;line-height:16px;text-align:center;font-weight:bold;box-shadow:inset 0 0 0 1px #b8d0f8">删除</div>
<div class="abs" style="left:900px;top:178px;width:37px;height:18px;box-sizing:border-box;background:linear-gradient(#fff,#ecebe6);border:1px solid #30507a;border-radius:2.500px;color:#111;font-size:9px;line-height:17px;text-align:center;font-weight:bold">拟合</div>
<!-- graph panel -->
<div class="panel" style="left:608px;top:211px;width:392px;height:351px;background:#5a5a5a"></div>
<div class="abs" style="left:606px;top:208px;width:394px;height:4px;background:#414141"></div>
<div class="ptitle" style="left:610px;top:211.800px;width:389px;height:14px;line-height:11px;padding-left:3px">图形显示区<b>✕</b></div>
<div class="abs" style="left:609px;top:225.500px;width:389px;height:24.500px;background:linear-gradient(#eceef0,#dcdfe3 30%,#b6bac1 62%,#a9aeb6 85%,#bcc0c6);border-top:1px solid #f4f4f4;box-sizing:border-box"></div>
<div class="abs" style="left:610px;top:250px;width:388px;height:295px;background:#fff"></div>
<div class="abs" style="left:608.500px;top:212px;width:2px;height:333px;background:#e2e2e2"></div>
<div class="abs" style="left:997.500px;top:212px;width:2.500px;height:333px;background:#dedede"></div>
<div class="sel" style="left:894px;top:228px;width:20px;height:20px"></div>
<svg class="abs" style="left:609px;top:226px" width="390" height="24" viewBox="609 226 390 24" fill="none" stroke="#1fa04e" stroke-width="1.200" font-family="Liberation Serif, serif">
<path d="M616 245h14M616.500 240L625 231.500"/><path d="M623 234.500C626 236 627.300 238.500 627.200 242" stroke-width="1"/><path d="M625.800 241.300L627.300 244.300L628.600 241.100z" fill="#1fa04e" stroke="none"/>
<path d="M640 233.500L649.500 243"/><path d="M638 235.200L641.800 231.500M647.700 244.900L651.300 241.200" stroke-width="1.100"/>
<path d="M658.500 231.500v14M673 231.500v14M659 238.500h13.500"/><path d="M659 238.500l3-1.800v3.600zM672.500 238.500l-3-1.800v3.600z" fill="#1fa04e" stroke="none"/>
<path d="M679.500 232h14.500M679.500 245h14.500M686.700 233v11"/><path d="M686.700 232.600l-1.800 3h3.600zM686.700 244.400l-1.800-3h3.600z" fill="#1fa04e" stroke="none"/>
<circle cx="707.400" cy="238.600" r="6.600"/><path d="M707.400 238.600L703.400 234.600"/>
<circle cx="728.400" cy="238.600" r="6.600"/><path d="M723.900 243.100L732.900 234.100"/>
<path d="M743 245C744 238 749 233.500 756.500 232.500M747 246C748 241 751 238 756.500 236.800" stroke-width="1"/><circle cx="743" cy="245.500" r="1.100" fill="#e02020" stroke="none"/><circle cx="756.300" cy="232.500" r="1.100" fill="#e02020" stroke="none"/><circle cx="747.500" cy="236.500" r="1.100" fill="#e02020" stroke="none"/>
<rect x="762" y="231" width="1" height="15" fill="#666" stroke="none"/>
<!-- zoom fit -->
<g stroke="#1838d0" stroke-width="1.500"><path d="M769.500 234.500v-3h3M781.500 231.500h3v3M784.500 242.500v3h-3M772.500 245.500h-3v-3"/></g><circle cx="778.300" cy="236.300" r="3.300" stroke="#1fa04e" stroke-width="1.300" fill="#f4fff4"/><path d="M775.800 239L771.800 243.200" stroke="#1fa04e" stroke-width="1.800"/>
<g stroke="#f07030" stroke-width="1.300"><path d="M790 234.500v-3h3M801.500 231.500h3v3M804.500 242.500v3h-3M793 245.500h-3v-3"/></g><text x="792.800" y="243.500" font-family="Liberation Sans, sans-serif" font-size="12" font-weight="bold" fill="#1030c8" stroke="none">A</text>
<!-- rotate -->
<circle cx="819" cy="238.800" r="2.400" fill="#9adca8" stroke="none"/><path d="M815 241.200A4.400 4.400 0 0 1 821 234.700M823 236.400A4.400 4.400 0 0 1 817 242.900" stroke="#1a8a3a" stroke-width="1.900"/><path d="M820 232.500l3.200 2.300l-3.500 1.600zM818 245.100l-3.200-2.300l3.500-1.600z" fill="#1a8a3a" stroke="none"/>
<!-- eye -->
<path d="M833.500 233.500L847 238.500L833.500 244.500" stroke="#1a7a3a" stroke-width="1.300"/><ellipse cx="838.500" cy="238.800" rx="3.600" ry="4.600" fill="#2a2a2a" stroke="none"/><ellipse cx="837.800" cy="238.800" rx="1.600" ry="2.400" fill="#6a5a4a" stroke="none"/>
<!-- axis -->
<path d="M859 240V233M859 240L855 244.500" stroke="#1a7ab8" stroke-width="1.200"/><path d="M857.400 234L859 231.300L860.600 234z" fill="#1a7ab8" stroke="none"/><path d="M859 240h6" stroke="#e02020" stroke-width="1.300"/><path d="M864.500 238L867.800 240L864.500 242z" fill="#e02020" stroke="none"/>
<!-- zoom rect -->
<rect x="875.500" y="231.500" width="9.500" height="9.500" stroke="#4848c0" stroke-width="1" stroke-dasharray="1.500 1"/><circle cx="883.500" cy="240" r="3" stroke="#1fa04e" stroke-width="1.300" fill="#f0fff0"/><path d="M885.700 242.200L888.800 245.300" stroke="#1fa04e" stroke-width="1.800"/>
<text x="897" y="242.800" font-size="12" font-weight="bold" fill="#2020b0" stroke="none" textLength="14" lengthAdjust="spacingAndGlyphs">XY</text>
<rect x="916.500" y="231" width="1" height="15" fill="#555" stroke="none"/>
<circle cx="931.500" cy="238.500" r="5" stroke="#6a72c0" stroke-width="2.600" stroke-dasharray="2.100 1"/><circle cx="931.500" cy="238.500" r="4.200" stroke="#8a90d8" stroke-width="1.500"/>
</svg>
<div class="combo" style="left:943px;top:232px;width:55px;height:14px;line-height:12px;border-color:#d0d3d8;font-size:7.800px;color:#333">单选<i style="width:6px;overflow:hidden"></i></div>
<!-- canvas drawing -->
<svg class="abs" style="left:610px;top:250px" width="388" height="295" viewBox="610 250 388 295" font-family="Liberation Sans, sans-serif">
<circle cx="805" cy="396.500" r="134" fill="none" stroke="#686868" stroke-width="1"/>
<path d="M793.200 405.900h5M795.700 403.400v5" stroke="#222" stroke-width=".9"/>
<path d="M804.500 396.500L917 462.500" stroke="#e81818" stroke-width="1.300"/><path d="M920.500 464.500L911.500 463L914.300 458z" fill="#e81818"/>
<text transform="translate(848.500 418.500) rotate(30.500)" font-size="10.500" fill="#e82020">D0.1553</text>
<path d="M634.200 520V505" stroke="#14c422" stroke-width="3.400"/><path d="M630.800 505.800L634.200 501L637.600 505.800z" fill="#14c422"/>
<path d="M634 520.200H649.500" stroke="#cc1212" stroke-width="3.600"/><path d="M649 516.800L653.600 520.200L649 523.600z" fill="#cc1212"/>
<circle cx="634" cy="520.200" r="3.700" fill="#10109c"/>
<g font-family="Liberation Serif, serif" font-size="10.500" fill="#111" stroke="#111" stroke-width=".25"><text x="634" y="499.300">Y</text><text x="655.600" y="520.800">X</text><text x="636" y="518" font-size="7" fill="#223" stroke="none">Z</text></g>
</svg>
<!-- bottom tabs -->
<div class="abs" style="left:610px;top:545.500px;width:50px;height:14.500px;background:linear-gradient(#fdfdfd,#e4e6ea);border-radius:0 0 3px 3px;color:#222;font-size:8.600px;line-height:16px;text-align:center;text-shadow:0 0 .5px #444">图形显示区</div>
<div class="btab" style="left:668px">数据显示区</div>
<div class="btab" style="left:720px">元素复制</div>
<div class="btab" style="left:765px">位置公差</div>
<div class="btab" style="left:810px">影像导航</div>
<!--R-END-->
<!--B-START-->
<!-- element list panel -->
<div class="abs" style="left:0;top:445px;width:532px;height:3px;background:#3a3a3a"></div>
<div class="panel" style="left:0;top:448px;width:306.500px;height:114px;background:#fff"></div>
<div class="ptitle" style="left:0;top:448px;width:306.500px;height:14px;line-height:12px;padding-left:3px">元素列表<b>✕</b></div>
<div class="abs" style="left:0;top:462px;width:11px;height:14px;background:#d6d6d6"></div>
<div class="abs" style="left:11px;top:475px;width:288px;height:1px;background:#444"></div>
<svg class="abs" style="left:0;top:462px" width="308" height="22" viewBox="0 462 308 22" font-family="Liberation Sans, Noto Sans CJK SC, sans-serif">
<defs><linearGradient id="tg" x1="0" y1="0" x2="1" y2="1"><stop offset="0" stop-color="#7ae060"/><stop offset="1" stop-color="#1aa018"/></linearGradient></defs>
<path d="M1.500 469L11 475L1.500 481z" fill="url(#tg)" stroke="#2a9a20" stroke-width=".6"/>
<circle cx="18.500" cy="468.800" r="4.300" fill="#f4f4fc" stroke="#1a1a3a" stroke-width="1.200"/><circle cx="18.500" cy="468.800" r="1.300" fill="#8888c8"/>
<rect x="25.500" y="464.500" width="8" height="8.500" fill="#fff" stroke="#222" stroke-width="1.100"/><text x="26" y="472" font-size="7.500" fill="#111">圆</text><text x="34.500" y="472.300" font-size="8.200" fill="#301838">92</text>
<rect x="80.500" y="464.500" width="8" height="8.500" fill="#fff" stroke="#222" stroke-width="1.100"/><text x="81" y="472" font-size="7.500" fill="#111">圆</text><text x="89.500" y="472.300" font-size="8.200" fill="#301838">92</text>
<text x="290.500" y="472.300" font-size="8.200" fill="#502080">1</text>
<rect x="297.500" y="464.500" width="8" height="8" fill="#fff" stroke="#555" stroke-width="1"/><path d="M299 468.500l2 2l3.500-4.500" stroke="#333" stroke-width="1" fill="none"/>
<path d="M305 470.500L295.500 476L305 481.500z" fill="url(#tg)" stroke="#2a9a20" stroke-width=".6"/>
</svg>
<!-- coordinate display panel -->
<div class="panel" style="left:310.500px;top:448px;width:220.500px;height:114px;background:#c2c2c2"></div>
<div class="ptitle" style="left:310.500px;top:448px;width:220.500px;height:14px;line-height:12px;padding-left:4px">坐标显示区<b>✕</b></div>
<div class="cbtn" style="left:314px;top:470px">X</div><div class="cdisp" style="left:340px;top:471px"><span class="sg">−</span>1.5250</div><div class="cbtn h" style="left:504px;top:470px">X<i>/</i><s>2</s></div>
<div class="cbtn" style="left:314px;top:498px">Y</div><div class="cdisp" style="left:340px;top:499px"><span class="sg">+</span>6.3679</div><div class="cbtn h" style="left:504px;top:498px">Y<i>/</i><s>2</s></div>
<div class="cbtn" style="left:314px;top:525px">Z</div><div class="cdisp" style="left:340px;top:526px"><span class="sg">+</span>0.0000</div><div class="cbtn h" style="left:504px;top:525px">Z<i>/</i><s>2</s></div>
<!-- status bar -->
<div class="abs" style="left:0;top:563px;width:1000px;height:14px;background:linear-gradient(#29292c,#3a3b40 45%,#48494f);border-bottom:1px solid #3a4668;box-sizing:border-box"></div>
<div class="abs" style="left:0;top:576px;width:72px;height:1px;background:#3e6a44"></div>
<div class="st" style="left:525px;color:#dcdcdc;font-family:'Liberation Mono',monospace;font-size:8.500px;letter-spacing:-.4px">0:00:00:00</div>
<div class="st y" style="left:608px;font-family:'Liberation Mono',monospace;font-size:8.500px">4.5</div>
<div class="st y" style="left:691px">探针未初始化</div>
<div class="st y" style="left:774px">临时坐标系</div>
<div class="st" style="left:858px">毫米</div>
<div class="st" style="left:901px">度分秒</div>
<div class="st" style="left:960px">直角坐标</div>
<div class="ss" style="left:522px"></div><div class="ss" style="left:604px"></div><div class="ss" style="left:688px"></div><div class="ss" style="left:771px"></div><div class="ss" style="left:855px"></div><div class="ss" style="left:898px"></div><div class="ss" style="left:957px"></div>
<!--B-END-->
</body>
</html>
